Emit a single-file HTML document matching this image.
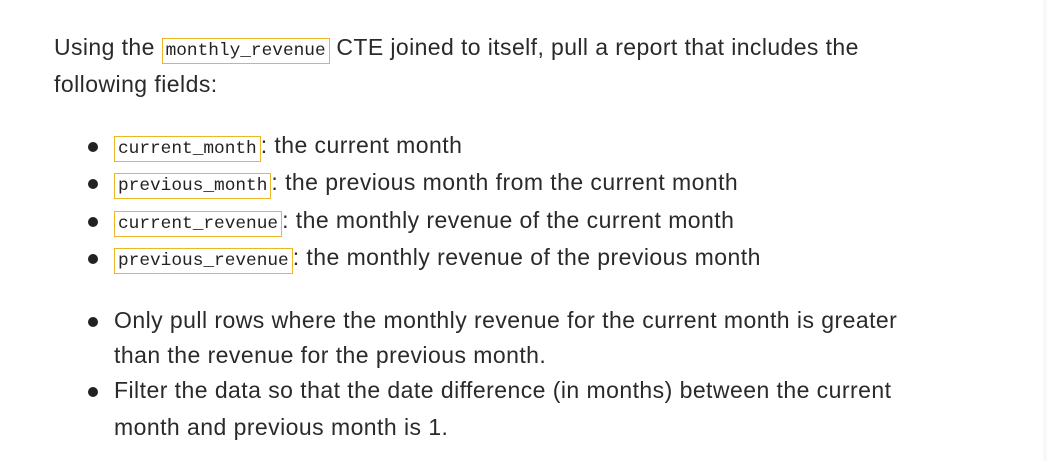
<!DOCTYPE html>
<html><head><style>
html,body{margin:0;padding:0;background:#fff;width:1047px;height:461px;overflow:hidden}
body{font-family:"Liberation Sans",sans-serif;font-size:23px;letter-spacing:0.45px;color:#2a2a2a;position:relative}
.l{position:absolute;white-space:nowrap;line-height:30px}
code{font-family:"Liberation Mono",monospace;font-size:17.8px;letter-spacing:0;border:1px solid #f0b429;padding:2px 3px;color:#222;background:#fff}
.b{position:absolute;width:10px;height:10px;border-radius:50%;background:#222}
.sb{position:absolute;right:0;top:0;width:4px;height:461px;background:#f7f8f8}
</style></head><body>
<div class="sb"></div>
<div class="l" style="left:54px;top:32px;letter-spacing:0.4px">Using the <code>monthly_revenue</code> CTE joined to itself, pull a report that includes the</div>
<div class="l" style="left:54px;top:69px">following fields:</div>

<div class="b" style="left:88px;top:142px"></div>
<div class="l" style="left:114px;top:130px"><code>current_month</code>: the current month</div>
<div class="b" style="left:88px;top:179px"></div>
<div class="l" style="left:114px;top:167px"><code>previous_month</code>: the previous month from the current month</div>
<div class="b" style="left:88px;top:217px"></div>
<div class="l" style="left:114px;top:205px"><code>current_revenue</code>: the monthly revenue of the current month</div>
<div class="b" style="left:88px;top:254px"></div>
<div class="l" style="left:114px;top:242px"><code>previous_revenue</code>: the monthly revenue of the previous month</div>

<div class="b" style="left:88px;top:317px"></div>
<div class="l" style="left:114px;top:305px">Only pull rows where the monthly revenue for the current month is greater</div>
<div class="l" style="left:114px;top:340px">than the revenue for the previous month.</div>
<div class="b" style="left:88px;top:387px"></div>
<div class="l" style="left:114px;top:375px">Filter the data so that the date difference (in months) between the current</div>
<div class="l" style="left:114px;top:412px">month and previous month is 1.</div>
</body></html>
